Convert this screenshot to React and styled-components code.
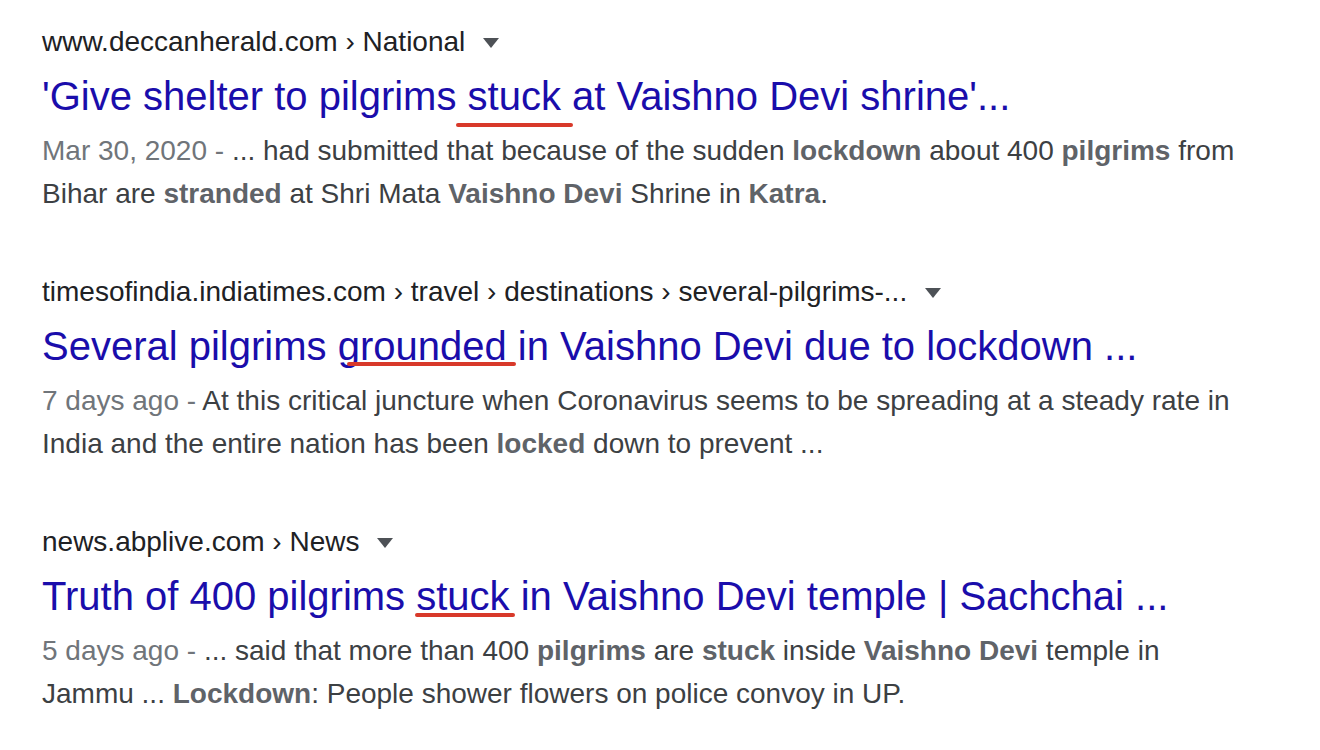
import React from 'react';
import styled, { createGlobalStyle } from 'styled-components';

const GlobalStyle = createGlobalStyle`
  html, body {
    margin: 0;
    background: #fff;
  }
  body {
    font-family: "Liberation Sans", Arial, sans-serif;
  }
`;

const Page = styled.main`
  padding: 24px 0 0 42px;
  display: flex;
  flex-direction: column;
  gap: 59px;
`;

const Result = styled.div`
  width: 1200px;
`;

const Cite = styled.div`
  display: flex;
  align-items: center;
  font-size: 28px;
  line-height: 36px;
  color: #202124;
  white-space: nowrap;
`;

const Arrow = styled.span`
  width: 0;
  height: 0;
  margin-left: 18px;
  margin-top: 2px;
  border-left: 8px solid transparent;
  border-right: 8px solid transparent;
  border-top: 10px solid #4d5156;
`;

const Title = styled.h3`
  margin: 10px 0 7px;
  font-size: 40px;
  font-weight: normal;
  line-height: 52px;
  color: #1a0dab;
  white-space: nowrap;
`;

const Mark = styled.span`
  position: relative;

  &::after {
    content: '';
    position: absolute;
    left: ${(p) => p.$l}px;
    right: ${(p) => p.$r}px;
    top: ${(p) => p.$t}px;
    height: 4px;
    border-radius: 2px;
    background: #d8392a;
  }
`;

const Snippet = styled.div`
  font-size: 28px;
  line-height: 43px;
  color: #3c4043;

  b {
    color: #5f6368;
    font-weight: bold;
  }
`;

const When = styled.span`
  color: #70757a;
`;

const results = [
  {
    cite: 'www.deccanherald.com › National',
    title: (
      <>
        'Give shelter to pilgrims <Mark $l={-12} $r={-12} $t={49}>stuck</Mark> at Vaishno Devi shrine'...
      </>
    ),
    when: 'Mar 30, 2020 - ',
    snippet: (
      <>
        ... had submitted that because of the sudden <b>lockdown</b> about 400 <b>pilgrims</b> from Bihar are{' '}
        <b>stranded</b> at Shri Mata <b>Vaishno Devi</b> Shrine in <b>Katra</b>.
      </>
    ),
  },
  {
    cite: 'timesofindia.indiatimes.com › travel › destinations › several-pilgrims-...',
    title: (
      <>
        Several pilgrims <Mark $l={9} $r={-9} $t={38}>grounded</Mark> in Vaishno Devi due to lockdown ...
      </>
    ),
    when: '7 days ago - ',
    snippet: (
      <>
        At this critical juncture when Coronavirus seems to be spreading at a steady rate in India and the entire
        nation has been <b>locked</b> down to prevent ...
      </>
    ),
  },
  {
    cite: 'news.abplive.com › News',
    title: (
      <>
        Truth of 400 pilgrims <Mark $l={-1} $r={-5} $t={39}>stuck</Mark> in Vaishno Devi temple | Sachchai ...
      </>
    ),
    when: '5 days ago - ',
    snippet: (
      <>
        ... said that more than 400 <b>pilgrims</b> are <b>stuck</b> inside <b>Vaishno Devi</b> temple in Jammu ...{' '}
        <b>Lockdown</b>: People shower flowers on police convoy in UP.
      </>
    ),
  },
];

export default function App() {
  return (
    <>
      <GlobalStyle />
      <Page>
        {results.map((r) => (
          <Result key={r.cite}>
            <Cite>
              {r.cite}
              <Arrow />
            </Cite>
            <Title>{r.title}</Title>
            <Snippet>
              <When>{r.when}</When>
              {r.snippet}
            </Snippet>
          </Result>
        ))}
      </Page>
    </>
  );
}
